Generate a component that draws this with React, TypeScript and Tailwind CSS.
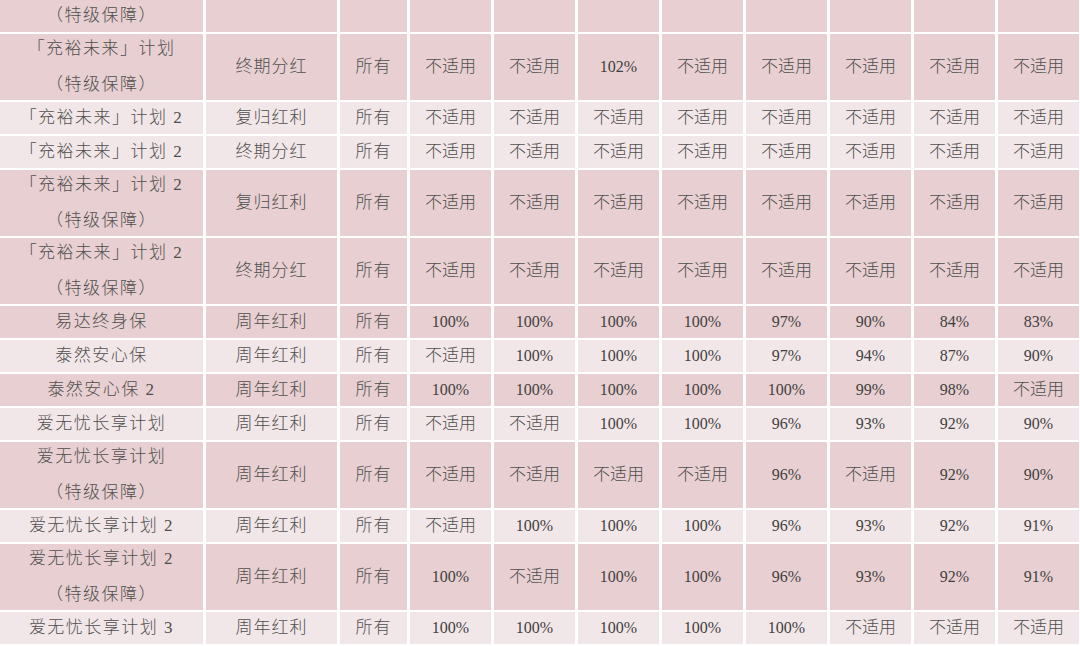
const NA = "不适用";

type Row = {
  name: string[];
  type: string;
  cells: string[];
  dark: boolean;
  tall?: boolean;
  blank?: boolean;
};

const rows: Row[] = [
  { name: ["（特级保障）"], type: "", cells: [], dark: true, blank: true },
  {
    name: ["「充裕未来」计划", "（特级保障）"],
    type: "终期分红",
    cells: [NA, NA, "102%", NA, NA, NA, NA, NA],
    dark: true,
    tall: true,
  },
  { name: ["「充裕未来」计划 2"], type: "复归红利", cells: Array(8).fill(NA), dark: false },
  { name: ["「充裕未来」计划 2"], type: "终期分红", cells: Array(8).fill(NA), dark: false },
  {
    name: ["「充裕未来」计划 2", "（特级保障）"],
    type: "复归红利",
    cells: Array(8).fill(NA),
    dark: true,
    tall: true,
  },
  {
    name: ["「充裕未来」计划 2", "（特级保障）"],
    type: "终期分红",
    cells: Array(8).fill(NA),
    dark: true,
    tall: true,
  },
  {
    name: ["易达终身保"],
    type: "周年红利",
    cells: ["100%", "100%", "100%", "100%", "97%", "90%", "84%", "83%"],
    dark: true,
  },
  {
    name: ["泰然安心保"],
    type: "周年红利",
    cells: [NA, "100%", "100%", "100%", "97%", "94%", "87%", "90%"],
    dark: false,
  },
  {
    name: ["泰然安心保 2"],
    type: "周年红利",
    cells: ["100%", "100%", "100%", "100%", "100%", "99%", "98%", NA],
    dark: true,
  },
  {
    name: ["爱无忧长享计划"],
    type: "周年红利",
    cells: [NA, NA, "100%", "100%", "96%", "93%", "92%", "90%"],
    dark: false,
  },
  {
    name: ["爱无忧长享计划", "（特级保障）"],
    type: "周年红利",
    cells: [NA, NA, NA, NA, "96%", NA, "92%", "90%"],
    dark: true,
    tall: true,
  },
  {
    name: ["爱无忧长享计划 2"],
    type: "周年红利",
    cells: [NA, "100%", "100%", "100%", "96%", "93%", "92%", "91%"],
    dark: false,
  },
  {
    name: ["爱无忧长享计划 2", "（特级保障）"],
    type: "周年红利",
    cells: ["100%", NA, "100%", "100%", "96%", "93%", "92%", "91%"],
    dark: true,
    tall: true,
  },
  {
    name: ["爱无忧长享计划 3"],
    type: "周年红利",
    cells: ["100%", "100%", "100%", "100%", "100%", NA, NA, NA],
    dark: false,
  },
];

function Cell({ text, dark, wide }: { text: string; dark: boolean; wide?: boolean }) {
  const isNum = text.includes("%");
  return (
    <div
      className={`flex items-center justify-center ${dark ? "bg-[#e8cfd1]" : "bg-[#f2e7e8]"} ${
        isNum ? "text-[16px] text-[#3f3f3f]" : "text-[17px] font-light text-[#4f4f4f]"
      } ${wide ? "tracking-[1px]" : ""}`}
    >
      {text}
    </div>
  );
}

export default function App() {
  return (
    <div
      className="h-[646px] w-[1080px] overflow-hidden bg-white"
      style={{ fontFamily: '"Liberation Serif", "Noto Sans CJK SC", serif' }}
    >
      <div className="flex flex-col gap-[2px]">
        {rows.map((row, i) => {
          const bg = row.dark ? "bg-[#e8cfd1]" : "bg-[#f2e7e8]";
          const cells = row.blank ? Array(8).fill("") : row.cells;
          return (
            <div
              key={i}
              className={`grid grid-cols-[203px_131px_67px_repeat(8,81px)] gap-x-[3px] ${
                row.tall ? "grid-rows-[66px]" : "grid-rows-[32px]"
              }`}
            >
              <div
                className={`flex flex-col items-center justify-center text-[17px] font-light tracking-[1.5px] text-[#4f4f4f] ${bg} ${
                  row.tall ? "leading-[36px]" : ""
                }`}
              >
                {row.name.map((n, j) => (
                  <span key={j}>{n}</span>
                ))}
              </div>
              <Cell text={row.type} dark={row.dark} wide />
              <Cell text={row.blank ? "" : "所有"} dark={row.dark} wide />
              {cells.map((c, j) => (
                <Cell key={j} text={c} dark={row.dark} />
              ))}
            </div>
          );
        })}
      </div>
    </div>
  );
}
